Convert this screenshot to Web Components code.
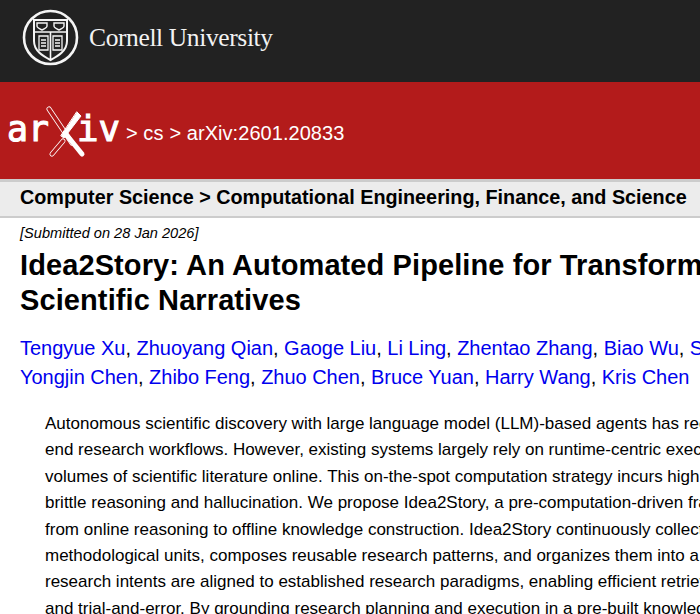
<!DOCTYPE html>
<html>
<head>
<meta charset="utf-8">
<title>arXiv:2601.20833</title>
<style>
  html, body { margin: 0; padding: 0; overflow: hidden; background: #fff; }
  body { font-family: "Liberation Sans", Arial, sans-serif; width: 700px; height: 614px; }
</style>
</head>
<body>
<cornell-bar></cornell-bar>
<arxiv-bar>
  <a>cs</a>
  <a>arXiv:2601.20833</a>
</arxiv-bar>
<subject-bar>Computer Science &gt; Computational Engineering, Finance, and Science</subject-bar>
<paper-view>
  <span slot="dateline">[Submitted on 28 Jan 2026]</span>
  <span slot="title">Idea2Story: An Automated Pipeline for Transforming Pre-Computed Research<br>Scientific Narratives</span>
  <span slot="authors"><author-link>Tengyue Xu</author-link>, <author-link>Zhuoyang Qian</author-link>, <author-link>Gaoge Liu</author-link>, <author-link>Li Ling</author-link>, <author-link>Zhentao Zhang</author-link>, <author-link>Biao Wu</author-link>, <author-link>Shuo Zhang</author-link>,<br><author-link>Yongjin Chen</author-link>, <author-link>Zhibo Feng</author-link>, <author-link>Zhuo Chen</author-link>, <author-link>Bruce Yuan</author-link>, <author-link>Harry Wang</author-link>, <author-link>Kris Chen</author-link></span>
  <span slot="abstract">Autonomous scientific discovery with large language model (LLM)-based agents has recently<br>
end research workflows. However, existing systems largely rely on runtime-centric execution<br>
volumes of scientific literature online. This on-the-spot computation strategy incurs high<br>
brittle reasoning and hallucination. We propose Idea2Story, a pre-computation-driven framework<br>
from online reasoning to offline knowledge construction. Idea2Story continuously collects<br>
methodological units, composes reusable research patterns, and organizes them into a<br>
research intents are aligned to established research paradigms, enabling efficient retrieval<br>
and trial-and-error. By grounding research planning and execution in a pre-built knowledge</span>
</paper-view>
<script>
class CornellBar extends HTMLElement {
  constructor() {
    super();
    this.attachShadow({ mode: 'open' }).innerHTML = `
      <style>
        :host { display: flex; align-items: center; gap: 10px; height: 82px; padding-left: 22px; background: #222; color: #f3f3f3; box-sizing: border-box; padding-bottom: 8px; }
        svg { display: block; flex: none; }
        span { font: 25.5px/1 "Liberation Serif", serif; letter-spacing: -0.38px; margin-top: 2px; }
      </style>
      <svg width="57" height="57" viewBox="0 0 57 57" fill="none" stroke="#f5f5f5">
        <circle cx="28.5" cy="28.5" r="26.5" stroke-width="2.6"/>
        <path stroke-width="2" d="M12 11H45V32C45 42 36 47 28.500 51C21 47 12 42 12 32Z"/>
        <path stroke-width="1.6" d="M12 23H45M28.500 23V50"/>
        <path stroke-width="1.400" d="M15 14H25V17C25 19 22 20 20 21C18 20 15 19 15 17Z M32 14H42V17C42 19 39 20 37 21C35 20 32 19 32 17Z"/>
        <path stroke-width="1.300" d="M17 27H26V41H17Z M31 27H40V41H31Z M19 31H24M19 34H24M19 37H24M33 31H38M33 34H38M33 37H38"/>
      </svg>
      <span>Cornell University</span>`;
  }
}

class ArxivBar extends HTMLElement {
  constructor() {
    super();
    this.attachShadow({ mode: 'open' }).innerHTML = `
      <style>
        :host { display: flex; align-items: flex-start; height: 97px; background: #b31b1b; color: #fff; padding: 18px 0 0 7px; box-sizing: border-box; font-size: 20px; }
        svg { display: block; flex: none; margin-right: 6px; }
        text { font: 400 36px "DejaVu Sans Mono", monospace; fill: #fff; stroke: #fff; stroke-width: 1.1px; }
        ::slotted(a) { color: #fff; }
        ::slotted(a)::before { content: "> "; }
        .crumbs { display: flex; gap: 6px; margin-top: 22px; letter-spacing: .05px; }
      </style>
      <svg width="113" height="60" viewBox="0 0 113 60" fill="none" stroke-linecap="round">
        <text x="0" y="41" textLength="42" lengthAdjust="spacingAndGlyphs">ar</text>
        <text x="70" y="41" textLength="43" lengthAdjust="spacingAndGlyphs">iv</text>
        <path d="M42 9L65 43" stroke="#fff" stroke-width="5"/>
        <path d="M42 9L65 43" stroke="#b31b1b" stroke-width="3.400"/>
        <path d="M45 54L56 41" stroke="#fff" stroke-width="5"/>
        <path d="M45 54L56 41" stroke="#b31b1b" stroke-width="3.400"/>
        <path d="M70 12L74 16L57 38L54 36Z" fill="#fff" stroke="#fff" stroke-width="1"/>
        <path d="M58 33L75 54" stroke="#fff" stroke-width="5"/>
      </svg>
      <div class="crumbs"><slot></slot></div>`;
  }
}

class SubjectBar extends HTMLElement {
  constructor() {
    super();
    this.attachShadow({ mode: 'open' }).innerHTML = `
      <style>
        :host { display: block; height: 39px; background: #ececec; border-top: 3px solid #ccc; border-bottom: 2px solid #ccc; box-sizing: border-box; padding-left: 20px; font: 700 19.800px/30px "Liberation Sans", sans-serif; color: #000; white-space: nowrap; }
      </style>
      <slot></slot>`;
  }
}

class AuthorLink extends HTMLElement {
  constructor() {
    super();
    this.attachShadow({ mode: 'open' }).innerHTML = `
      <style>:host { display: inline; color: #00e; }</style><slot></slot>`;
  }
}

class PaperView extends HTMLElement {
  constructor() {
    super();
    this.attachShadow({ mode: 'open' }).innerHTML = `
      <style>
        :host { display: block; padding: 7px 0 0 20px; white-space: nowrap; color: #000; }
        .date { font: italic 14.600px/16px "Liberation Sans", sans-serif; }
        h1 { margin: 7px 0 0; font: 700 29px/35px "Liberation Sans", sans-serif; letter-spacing: .1px; }
        .authors { margin-top: 16px; font: 20px/29px "Liberation Sans", sans-serif; letter-spacing: -.02px; }
        .abstract { margin: 19px 0 0 25px; font: 17px/26.400px "Liberation Sans", sans-serif; }
      </style>
      <div class="date"><slot name="dateline"></slot></div>
      <h1><slot name="title"></slot></h1>
      <div class="authors"><slot name="authors"></slot></div>
      <div class="abstract"><slot name="abstract"></slot></div>`;
  }
}

customElements.define('cornell-bar', CornellBar);
customElements.define('arxiv-bar', ArxivBar);
customElements.define('subject-bar', SubjectBar);
customElements.define('author-link', AuthorLink);
customElements.define('paper-view', PaperView);
</script>
</body>
</html>
